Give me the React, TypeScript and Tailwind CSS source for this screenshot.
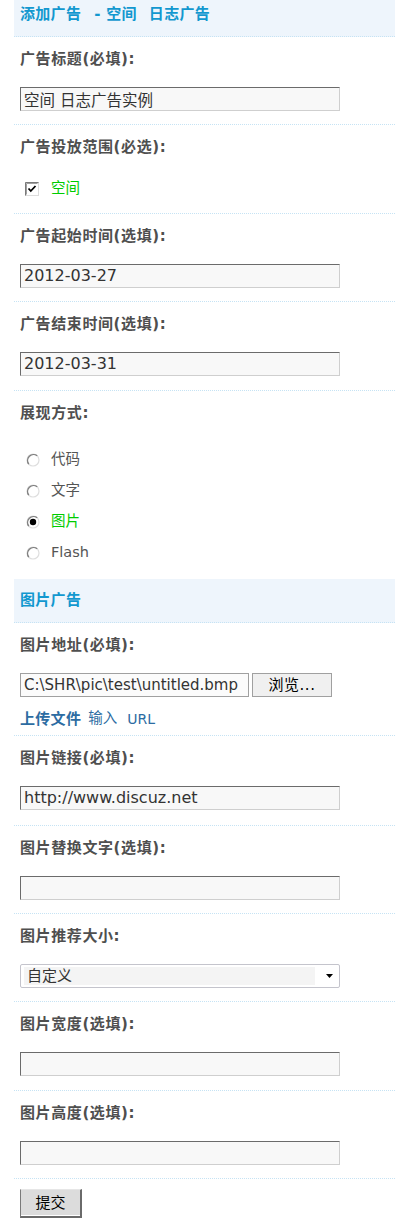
import React from 'react';

const FONT = "font-['DejaVu_Sans','Noto_Sans_CJK_SC',sans-serif]";

// Campo de texto con borde hundido
const Field = ({ value = '', small = false }: { value?: string; small?: boolean }) => (
  <input
    readOnly
    value={value}
    className={`mt-[16px] block h-[24px] w-[320px] border border-[#6b6b6b] border-r-[#cfcfcf] border-b-[#cfcfcf] bg-[#f8f8f8] px-[3px] text-[#333] outline-none ${small ? 'text-[15.5px]' : 'text-[16px]'}`}
  />
);

const Row = ({ label, children, pb = 'pb-[13px]' }: { label: string; children: React.ReactNode; pb?: string }) => (
  <div className={`border-b border-dotted border-[#c6e3f4] pl-[6px] pt-[10px] ${pb}`}>
    <div className="h-[24px] text-[15px] leading-[24px] font-bold tracking-[0.6px] text-[#4f4f4f]">{label}</div>
    {children}
  </div>
);

const Radio = ({ checked }: { checked?: boolean }) => (
  <svg width="14" height="14" viewBox="0 0 14 14">
    <circle cx="7" cy="7" r="6" fill="#fff" stroke="#dedede" strokeWidth="1.2" />
    <path d="M 11.2 2.8 A 6 6 0 0 0 2.8 11.2" fill="none" stroke="#808080" strokeWidth="1.4" />
    {checked && <circle cx="7" cy="7" r="3.2" fill="#000" />}
  </svg>
);

const Checkbox = () => (
  <svg width="14" height="14" viewBox="0 0 14 14">
    <rect x="0.5" y="0.5" width="13" height="13" fill="#fff" stroke="#dcdcdc" />
    <path d="M0.5 13.5 V0.5 H13.5" fill="none" stroke="#7a7a7a" />
    <path d="M1.5 12.5 V1.5 H12.5" fill="none" stroke="#a0a0a0" />
    <path d="M3.5 6.5 L5.8 9 L10.5 4" fill="none" stroke="#000" strokeWidth="1.8" />
  </svg>
);

export default function App() {
  return (
    <div className={`ml-[14px] w-[381px] bg-white text-[14px] ${FONT}`}>
      {/* Cabecera */}
      <div className="h-[37px] border-b border-dotted border-[#c6e3f4] bg-[#eef5fc] pl-[6px] text-[15px] leading-[28px] font-bold tracking-[0.3px] text-[#1298cf]">
        添加广告<span className="ml-[13px]">- 空间</span><span className="ml-[12px]">日志广告</span>
      </div>

      <Row label="广告标题(必填):">
        <Field value="空间 日志广告实例" small />
      </Row>

      <Row label="广告投放范围(必选):" pb="pb-[12px]">
        <div className="mt-[18px] flex h-[24px] items-center">
          <span className="ml-[5px] flex"><Checkbox /></span>
          <span className="ml-[12px] text-[14.5px] text-[#00cc00]">空间</span>
        </div>
      </Row>

      <Row label="广告起始时间(选填):">
        <Field value="2012-03-27" />
      </Row>

      <Row label="广告结束时间(选填):" pb="pb-[14px]">
        <Field value="2012-03-31" />
      </Row>

      <div className="pl-[6px] pt-[10px] pb-[11px]">
        <div className="h-[24px] text-[15px] leading-[24px] font-bold tracking-[0.6px] text-[#4f4f4f]">展现方式:</div>
        <div className="mt-[19px]">
          {[
            { t: '代码', c: false },
            { t: '文字', c: false },
            { t: '图片', c: true },
            { t: 'Flash', c: false },
          ].map((r) => (
            <div key={r.t} className="flex h-[31px] items-center">
              <span className="ml-[6px] flex"><Radio checked={r.c} /></span>
              <span className={`ml-[11px] text-[14.5px] ${r.c ? 'text-[#00cc00]' : 'text-[#555]'}`}>{r.t}</span>
            </div>
          ))}
        </div>
      </div>

      {/* Sección imagen */}
      <div className="h-[44px] border-b border-dotted border-[#c6e3f4] bg-[#eef5fc] pl-[6px] text-[15px] leading-[43px] font-bold tracking-[0.3px] text-[#1298cf]">
        图片广告
      </div>

      <Row label="图片地址(必填):" pb="pb-[6px]">
        <div className="mt-[16px] flex">
          <input
            readOnly
            value="C:\SHR\pic\test\untitled.bmp"
            className="block h-[24px] w-[229px] border border-[#a0a0a0] bg-[#fbfbfb] px-[3px] text-[15px] text-[#333] outline-none"
          />
          <button className="ml-[3px] h-[24px] w-[80px] border border-[#a0a0a0] bg-[#f0f0f0] text-[15px] tracking-[0.5px] text-black">浏览...</button>
        </div>
        <div className="mt-[12px] flex h-[20px] items-center text-[#2d6ca2]">
          <span className="text-[15px] font-bold tracking-[0.3px]">上传文件</span>
          <span className="ml-[7px] text-[14.5px]">输入</span>
          <span className="ml-[10px] text-[14px]">URL</span>
        </div>
      </Row>

      <Row label="图片链接(必填):" pb="pb-[15px]">
        <Field value="http://www.discuz.net" />
      </Row>

      <Row label="图片替换文字(选填):">
        <Field />
      </Row>

      <Row label="图片推荐大小:">
        <div className="mt-[16px] flex h-[24px] w-[320px] items-center rounded-[2px] border border-[#c4c4cc] pl-[3px]">
          <div className="h-[18px] w-[291px] bg-[#f4f4f4] pl-[3px] text-[15px] leading-[18px] text-[#333]">自定义</div>
          <svg className="ml-[11px]" width="7" height="4" viewBox="0 0 7 4">
            <path d="M0 0 H7 L3.5 4 Z" fill="#000" />
          </svg>
        </div>
      </Row>

      <Row label="图片宽度(选填):" pb="pb-[14px]">
        <Field />
      </Row>

      <Row label="图片高度(选填):">
        <Field />
      </Row>

      <div className="pl-[6px] pt-[10px] pb-[13px]">
        <button className="h-[29px] w-[62px] border-t border-l border-r-2 border-b-2 border-t-[#e6e6e6] border-l-[#7a7a7a] border-r-[#6a6a6a] border-b-[#6a6a6a] bg-[#dcdcdc] text-[15px] text-black shadow-[inset_0_-1px_0_#fff]">
          提交
        </button>
      </div>
    </div>
  );
}
